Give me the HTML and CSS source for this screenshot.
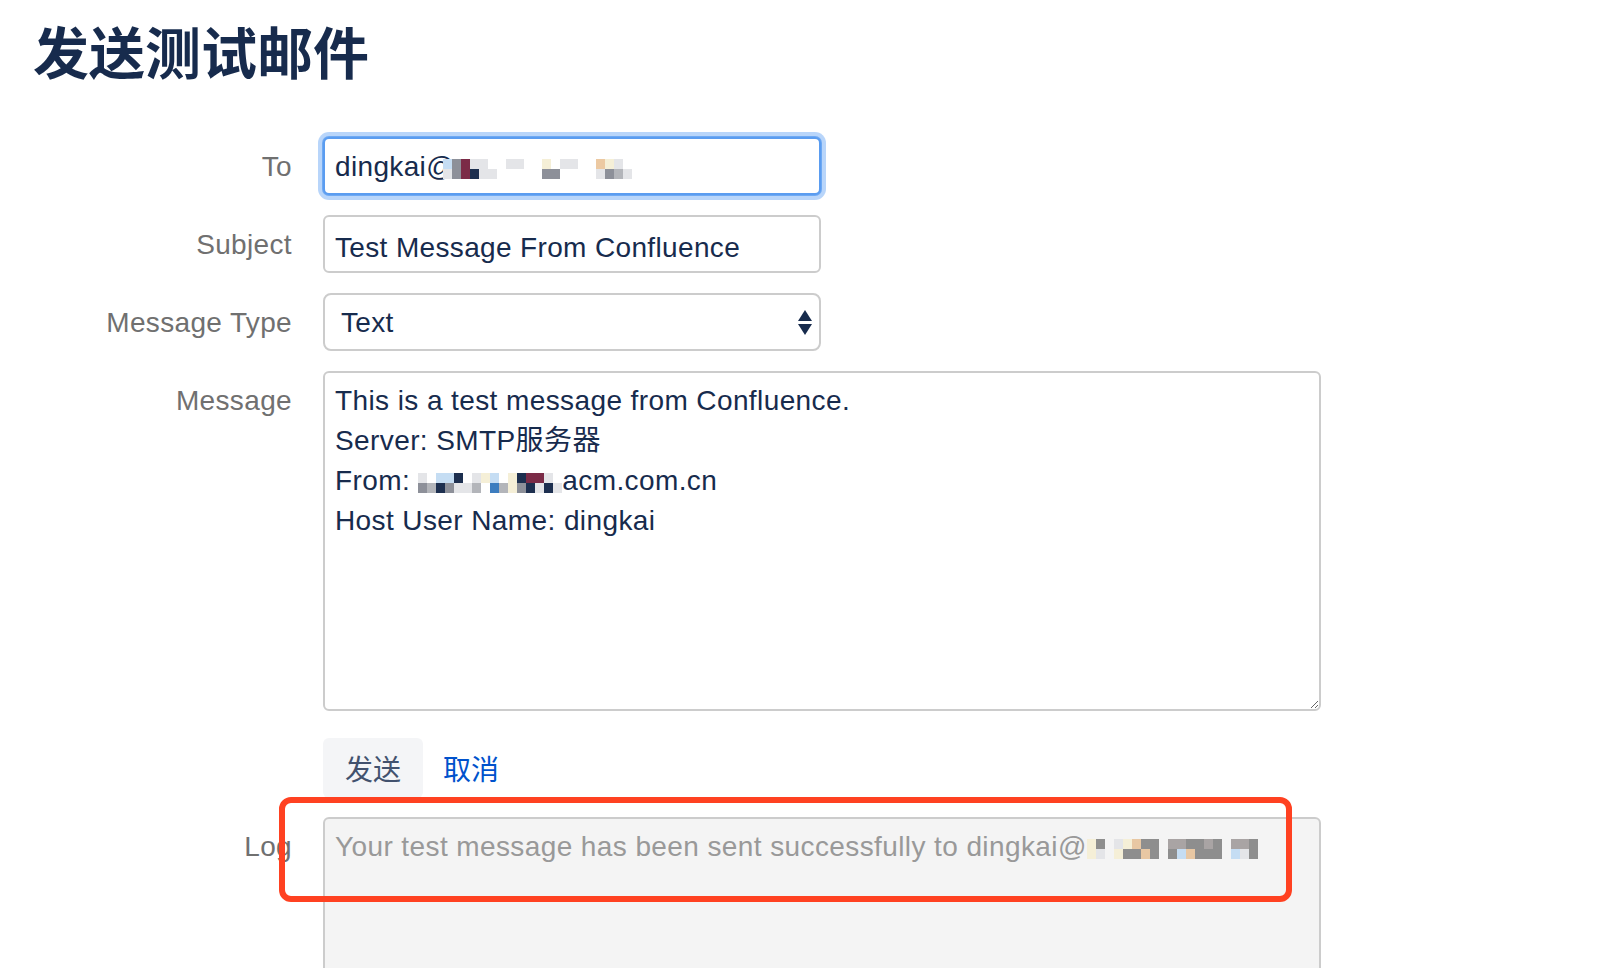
FILE: index.html
```html
<!DOCTYPE html>
<html lang="zh-CN">
<head>
    <meta charset="UTF-8">
    <meta name="viewport" content="width=device-width, initial-scale=1.0">
    <title>发送测试邮件</title>
    <link rel="stylesheet" href="styles.css">
</head>
<body>
    <div class="page">
        <h1 class="page-title">发送测试邮件</h1>

        <form class="mail-form">
            <div class="field-row">
                <label class="field-label">To</label>
                <div class="text-box short focused">dingkai@<span class="mosaic shift"><i class="m5"></i><i class="m1"></i><i class="m2"></i><i class="m2"></i><i class="m4"></i><i class="m4"></i><i class="m1"></i><i class="m3"></i><i class="m1"></i><i class="m1"></i><i></i><i class="m1"></i><i></i><i></i><i class="m1"></i><i></i><i class="m1"></i><i></i><i></i><i></i><i></i><i></i><i class="m6"></i><i class="m2"></i><i></i><i class="m2"></i><i class="m1"></i><i></i><i class="m1"></i><i></i><i></i><i></i><i></i><i></i><i class="m9"></i><i class="m1"></i><i class="m6"></i><i class="m2"></i><i class="m1"></i><i class="m7"></i><i></i><i class="m1"></i></span></div>
            </div>

            <div class="field-row">
                <label class="field-label" for="subject">Subject</label>
                <input class="text-box short input" id="subject" type="text" value="Test Message From Confluence">
            </div>

            <div class="field-row">
                <label class="field-label" for="type">Message Type</label>
                <div class="select-wrap short">
                    <select class="select-box" id="type">
                        <option>Text</option>
                        <option>HTML</option>
                    </select>
                    <svg class="select-arrows" width="14" height="26" viewBox="0 0 14 26">
                        <polygon points="0,11 7,0 14,11" fill="#172b4d"/>
                        <polygon points="0,14 14,14 7,25" fill="#172b4d"/>
                    </svg>
                </div>
            </div>

            <div class="field-row">
                <label class="field-label">Message</label>
                <div class="text-area message">
                    <div>This is a test message from Confluence.</div>
                    <div>Server: SMTP服务器</div>
                    <div>From: <span class="mosaic"><i class="m1"></i><i class="m2"></i><i></i><i class="m7"></i><i class="m5"></i><i class="m3"></i><i class="m5"></i><i class="m2"></i><i class="m3"></i><i class="m1"></i><i></i><i class="m1"></i><i class="m1"></i><i class="m7"></i><i class="m6"></i><i></i><i class="m5"></i><i class="m8"></i><i></i><i class="m7"></i><i class="m6"></i><i class="m6"></i><i class="m3"></i><i class="m2"></i><i class="m4"></i><i class="m3"></i><i class="m4"></i><i class="m1"></i><i class="m1"></i><i class="m3"></i><i></i><i class="m1"></i></span>acm.com.cn</div>
                    <div>Host User Name: dingkai</div>
                </div>
            </div>

            <div class="field-row actions">
                <div></div>
                <div class="buttons">
                    <button class="btn" type="button">发送</button>
                    <a class="cancel-link" href="#">取消</a>
                </div>
            </div>

            <div class="field-row log-row">
                <label class="field-label">Log</label>
                <div class="text-area log">Your test message has been sent successfully to dingkai@<span class="mosaic"><i class="m6"></i><i class="m6"></i><i class="m2"></i><i class="m1"></i><i></i><i></i><i class="m1"></i><i class="m6"></i><i class="m6"></i><i class="m2"></i><i class="m9"></i><i class="m2"></i><i class="m2"></i><i class="m9"></i><i class="m2"></i><i class="m2"></i><i></i><i></i><i class="m7"></i><i class="m2"></i><i class="m7"></i><i class="m5"></i><i class="m2"></i><i class="m9"></i><i class="m2"></i><i class="m2"></i><i class="m7"></i><i class="m2"></i><i class="m2"></i><i class="m2"></i><i></i><i></i><i class="m7"></i><i class="m5"></i><i class="m7"></i><i class="m1"></i><i class="m2"></i><i class="m2"></i></span></div>
                <!-- annotation box drawn over the log -->
                <div class="highlight"></div>
            </div>
        </form>
    </div>
</body>
</html>
```

FILE: styles.css
```css
body {
    margin: 0;
    font-family: "Liberation Sans", "Noto Sans CJK SC", sans-serif;
    background-color: #fff;
    color: #172b4d;
}

.page {
    height: 100vh;
    overflow: hidden;
    box-sizing: border-box;
    padding: 22px 0 0 33px;
}

.page-title {
    margin: 0;
    font-family: "Noto Sans CJK SC", sans-serif;
    font-size: 56px;
    line-height: 56px;
    font-weight: 700;
    color: #172b4d;
}

.mail-form {
    margin-top: 59px;
}

.field-row {
    display: grid;
    grid-template-columns: 259px 1fr;
    column-gap: 31px;
    margin-bottom: 20px;
    position: relative;
}

.field-label {
    text-align: right;
    font-size: 28px;
    line-height: 40px;
    letter-spacing: 0.35px;
    padding-top: 10px;
    color: #707070;
}

.short {
    width: 498px;
}

.text-box {
    box-sizing: border-box;
    height: 58px;
    padding: 8px 10px 6px;
    border: 2px solid #cccccc;
    border-radius: 6px;
    background-color: #fff;
    font-family: "Liberation Sans", "Noto Sans CJK SC", sans-serif;
    font-size: 28px;
    line-height: 40px;
    letter-spacing: 0.35px;
    color: #172b4d;
    white-space: nowrap;
    outline: none;
    margin: 0;
}

.input {
    padding-top: 11px;
    padding-bottom: 3px;
}

.focused {
    border-color: #5a9cf0;
    box-shadow: 0 0 0 1px #6ea9f3, 0 0 0 5px rgba(126, 178, 246, 0.55);
}

.select-wrap {
    position: relative;
}

.select-box {
    box-sizing: border-box;
    width: 100%;
    height: 58px;
    margin: 0;
    padding: 0 40px 0 16px;
    border: 2px solid #cccccc;
    border-radius: 8px;
    background-color: #fff;
    font-family: "Liberation Sans", sans-serif;
    font-size: 28px;
    letter-spacing: 0.35px;
    color: #172b4d;
    appearance: none;
    -webkit-appearance: none;
    outline: none;
}

.select-arrows {
    position: absolute;
    right: 9px;
    top: 50%;
    margin-top: -12px;
    pointer-events: none;
}

.text-area {
    box-sizing: border-box;
    width: 998px;
    padding: 8px 10px;
    border: 2px solid #cccccc;
    border-radius: 6px;
    font-size: 28px;
    line-height: 40px;
    letter-spacing: 0.4px;
    white-space: nowrap;
}

.message {
    height: 340px;
    color: #172b4d;
    background-color: #fff;
    overflow: auto;
    resize: vertical;
}

.log {
    height: 240px;
    color: #999999;
    background-color: #f4f4f4;
}

.actions {
    margin-top: 27px;
    margin-bottom: 19px;
}

.buttons {
    display: flex;
    align-items: center;
}

.btn {
    height: 60px;
    padding: 0 22px;
    border: none;
    border-radius: 6px;
    background-color: #f4f5f7;
    font-family: "Noto Sans CJK SC", sans-serif;
    font-size: 28px;
    color: #42526e;
    cursor: pointer;
}

.cancel-link {
    margin-left: 20px;
    font-family: "Noto Sans CJK SC", sans-serif;
    font-size: 28px;
    color: #0052cc;
    text-decoration: none;
}

/* pixelated (redacted) parts of the addresses */
.mosaic {
    display: inline-grid;
    grid-auto-flow: column;
    grid-template-rows: 10px 10px;
    grid-auto-columns: 9px;
    vertical-align: middle;
}

.mosaic i {
    display: block;
}

.shift {
    margin-left: -12px;
}

.m1 { background-color: #e4e5e8; }
.m2 { background-color: #8d9099; }
.m3 { background-color: #1d2f4f; }
.m4 { background-color: #7b2b47; }
.m5 { background-color: #c5ddf3; }
.m6 { background-color: #f5efd7; }
.m7 { background-color: #b3b5ba; }
.m8 { background-color: #3d7dbf; }
.m9 { background-color: #ecc9a2; }

.log .m2 { background-color: #8e8e8e; }
.log .m7 { background-color: #a9a4a4; }
.log .m9 { background-color: #e8c7a3; }

.highlight {
    position: absolute;
    left: 246px;
    top: -20px;
    width: 1013px;
    height: 105px;
    box-sizing: border-box;
    border: 6px solid #ff4121;
    border-radius: 12px;
    pointer-events: none;
}
```
